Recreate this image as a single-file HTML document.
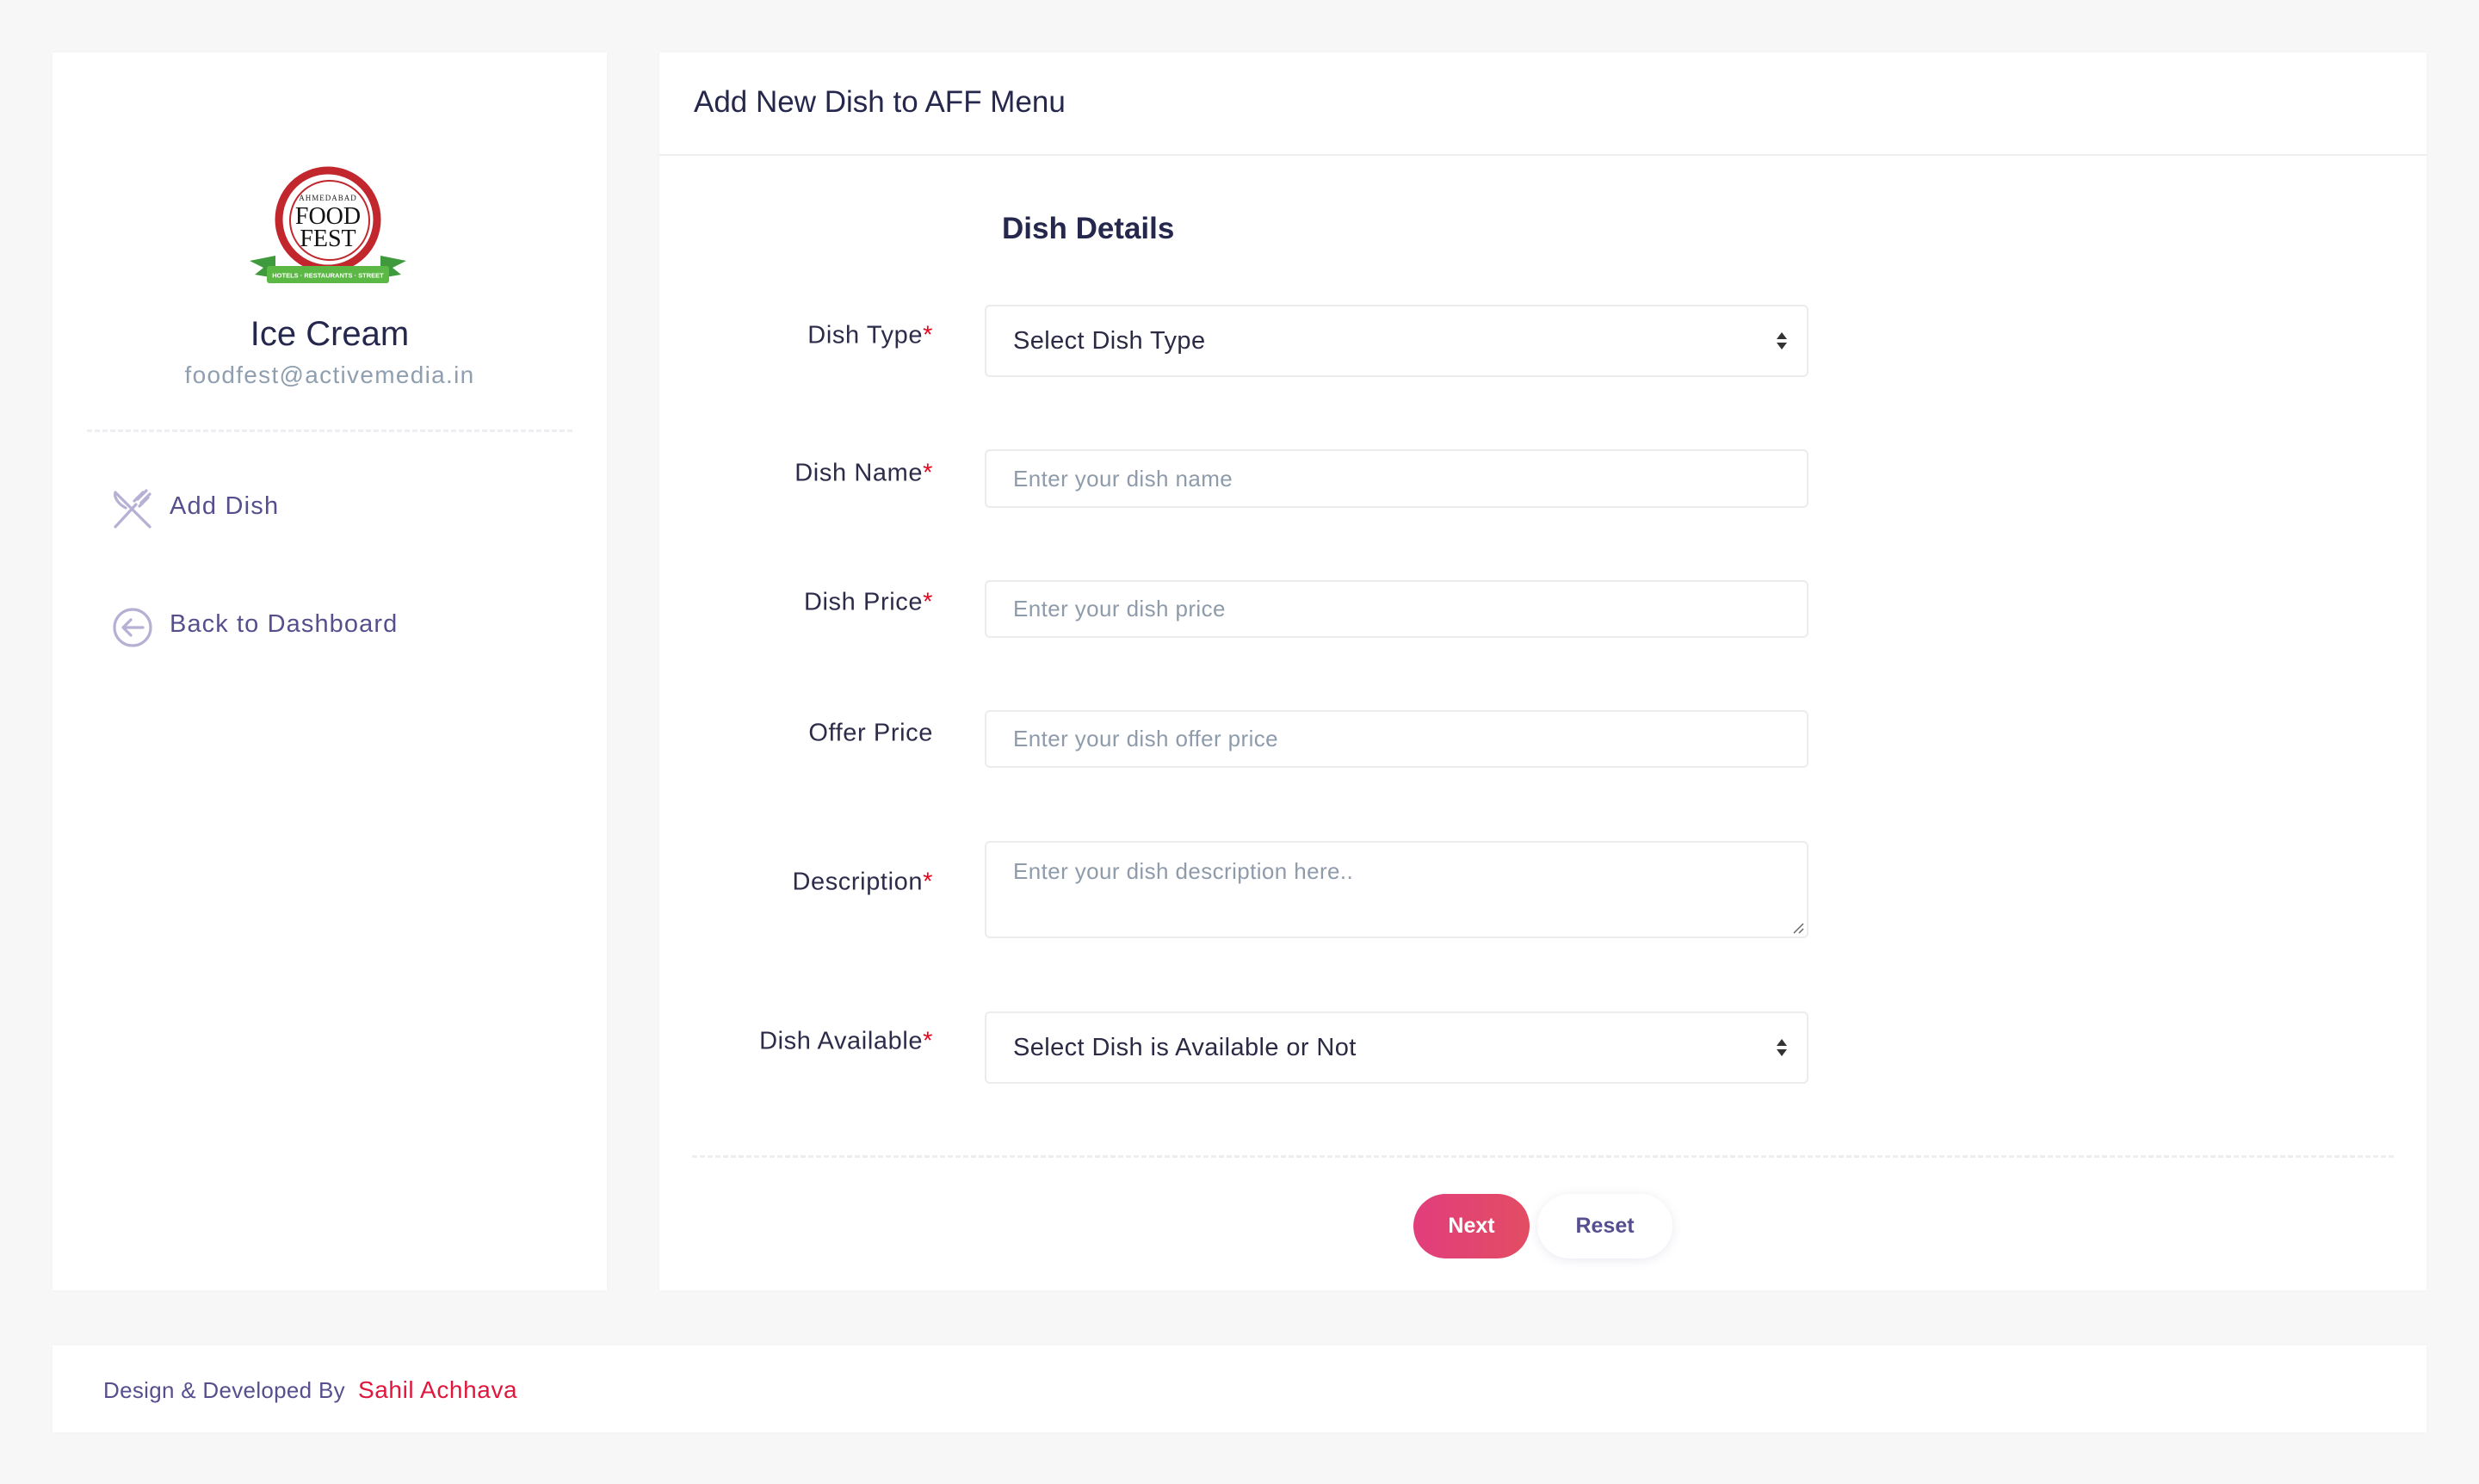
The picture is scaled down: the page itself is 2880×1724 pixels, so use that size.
<!DOCTYPE html>
<html><head><meta charset="utf-8"><style>
*{box-sizing:border-box;margin:0;padding:0}
body{width:2880px;height:1724px;background:#f7f7f7;font-family:"Liberation Sans",sans-serif;position:relative;overflow:hidden}
.a{position:absolute}
.card{background:#fff;box-shadow:0 0 4px rgba(0,0,0,0.03)}
.lbl{position:absolute;right:1796px;font-size:29px;color:#2c2c4a;white-space:nowrap;transform:translateY(-50%);letter-spacing:0.6px}
.lbl i{color:#e5061f;font-style:normal}
.inp{position:absolute;left:1144px;width:957px;border:2px solid #ececec;border-radius:6px;background:#fff;font-size:26px;color:#8e9bab;padding-left:31px;display:flex;align-items:center;letter-spacing:0.4px}
.sel{color:#2a2a45;font-size:29px}
.arr{position:absolute;right:22px;top:50%;transform:translateY(-50%);width:14px}
</style></head><body>
<div class="a card" style="left:61px;top:61px;width:644px;height:1438px"></div>
<div class="a card" style="left:766px;top:61px;width:2053px;height:1438px"></div>
<div class="a card" style="left:61px;top:1563px;width:2758px;height:101px"></div>

<svg class="a" style="left:290px;top:193px" width="182" height="142" viewBox="0 0 182 142">
<circle cx="91" cy="62" r="57" fill="none" stroke="#c1272d" stroke-width="9"/>
<circle cx="93" cy="63" r="46" fill="none" stroke="#c1272d" stroke-width="2"/>
<polygon points="0,110 30,104 30,130 6,126 16,118" fill="#3f9a3d"/>
<polygon points="182,110 152,104 152,130 176,126 166,118" fill="#3f9a3d"/>
<rect x="20" y="116" width="142" height="20" rx="3" fill="#5cb844"/>
<text x="91" y="129.5" text-anchor="middle" font-size="7.5" fill="#fff" font-family="Liberation Sans" font-weight="bold">HOTELS · RESTAURANTS · STREET</text>
<text x="91" y="40" text-anchor="middle" font-size="9" fill="#222" font-family="Liberation Serif" letter-spacing="1">AHMEDABAD</text>
<text x="91" y="67" text-anchor="middle" font-size="28" fill="#111" font-family="Liberation Serif">FOOD</text>
<text x="91" y="93" text-anchor="middle" font-size="28" fill="#111" font-family="Liberation Serif">FEST</text>
</svg>
<div class="a" style="left:61px;width:644px;top:366px;text-align:center;font-size:40px;color:#25274d">Ice Cream</div>
<div class="a" style="left:61px;width:644px;top:420px;text-align:center;font-size:28px;color:#8f9fb0;letter-spacing:1.3px">foodfest@activemedia.in</div>
<div class="a" style="left:101px;top:499px;width:564px;border-top:3px dashed #eceef2"></div>

<svg class="a" style="left:130px;top:568px" width="48" height="48" viewBox="0 0 48 48" fill="none" stroke="#b5b0d4" stroke-width="3.2" stroke-linecap="round">
<path d="M4 4 L44 44 M4 4 C2 10 8 18 16 22"/>
<path d="M36 4 L26 14 M42 10 L32 20 M40 2 L30 12 M44 6 L34 16 M28 18 L4 44"/>
</svg>
<div class="a" style="left:197px;top:572px;font-size:29px;color:#564f8e;letter-spacing:1.2px">Add Dish</div>
<svg class="a" style="left:130px;top:705px" width="48" height="48" viewBox="0 0 48 48" fill="none" stroke="#b5b0d4" stroke-width="3.2" stroke-linecap="round" stroke-linejoin="round">
<circle cx="24" cy="24" r="21"/><path d="M36 24 H13 M22 15 L13 24 L22 33"/>
</svg>
<div class="a" style="left:197px;top:709px;font-size:29px;color:#564f8e;letter-spacing:1.1px">Back to Dashboard</div>

<div class="a" style="left:806px;top:99px;font-size:35px;color:#25274d">Add New Dish to AFF Menu</div>
<div class="a" style="left:766px;top:179px;width:2053px;border-top:2px solid #eeeeee"></div>
<div class="a" style="left:1164px;top:246px;font-size:35px;font-weight:bold;color:#25274d">Dish Details</div>

<div class="lbl" style="top:390px">Dish Type<i>*</i></div>
<div class="inp sel" style="top:354px;height:84px">Select Dish Type<svg class="arr" height="22" viewBox="0 0 14 22"><path d="M7 1 L13 9 H1Z M7 21 L13 13 H1Z" fill="#333"/></svg></div>
<div class="lbl" style="top:550px">Dish Name<i>*</i></div>
<div class="inp" style="top:522px;height:68px">Enter your dish name</div>
<div class="lbl" style="top:700px">Dish Price<i>*</i></div>
<div class="inp" style="top:674px;height:67px">Enter your dish price</div>
<div class="lbl" style="top:852px">Offer Price</div>
<div class="inp" style="top:825px;height:67px">Enter your dish offer price</div>
<div class="lbl" style="top:1025px">Description<i>*</i></div>
<div class="inp" style="top:977px;height:113px;align-items:flex-start;padding-top:18px">Enter your dish description here..<svg class="a" style="right:3px;bottom:3px" width="14" height="14" viewBox="0 0 14 14" stroke="#666" stroke-width="1.5"><path d="M2 13 L13 2 M8 13 L13 8"/></svg></div>
<div class="lbl" style="top:1210px">Dish Available<i>*</i></div>
<div class="inp sel" style="top:1175px;height:84px">Select Dish is Available or Not<svg class="arr" height="22" viewBox="0 0 14 22"><path d="M7 1 L13 9 H1Z M7 21 L13 13 H1Z" fill="#333"/></svg></div>

<div class="a" style="left:804px;top:1342px;width:1977px;border-top:3px dashed #eceef2"></div>
<div class="a" style="left:1642px;top:1387px;width:135px;height:75px;border-radius:38px;background:linear-gradient(90deg,#e23d7c,#e24d63);color:#fff;font-weight:bold;font-size:25px;display:flex;align-items:center;justify-content:center">Next</div>
<div class="a" style="left:1786px;top:1387px;width:157px;height:75px;border-radius:38px;background:#fff;box-shadow:0 2px 12px rgba(80,70,140,0.12);color:#564f8e;font-weight:bold;font-size:25px;display:flex;align-items:center;justify-content:center">Reset</div>

<div class="a" style="left:120px;top:1599px;font-size:26px;color:#564f8e;letter-spacing:0.3px">Design &amp; Developed By&nbsp; <span style="color:#e0173d;font-size:28px;letter-spacing:0.6px">Sahil Achhava</span></div>
</body></html>
